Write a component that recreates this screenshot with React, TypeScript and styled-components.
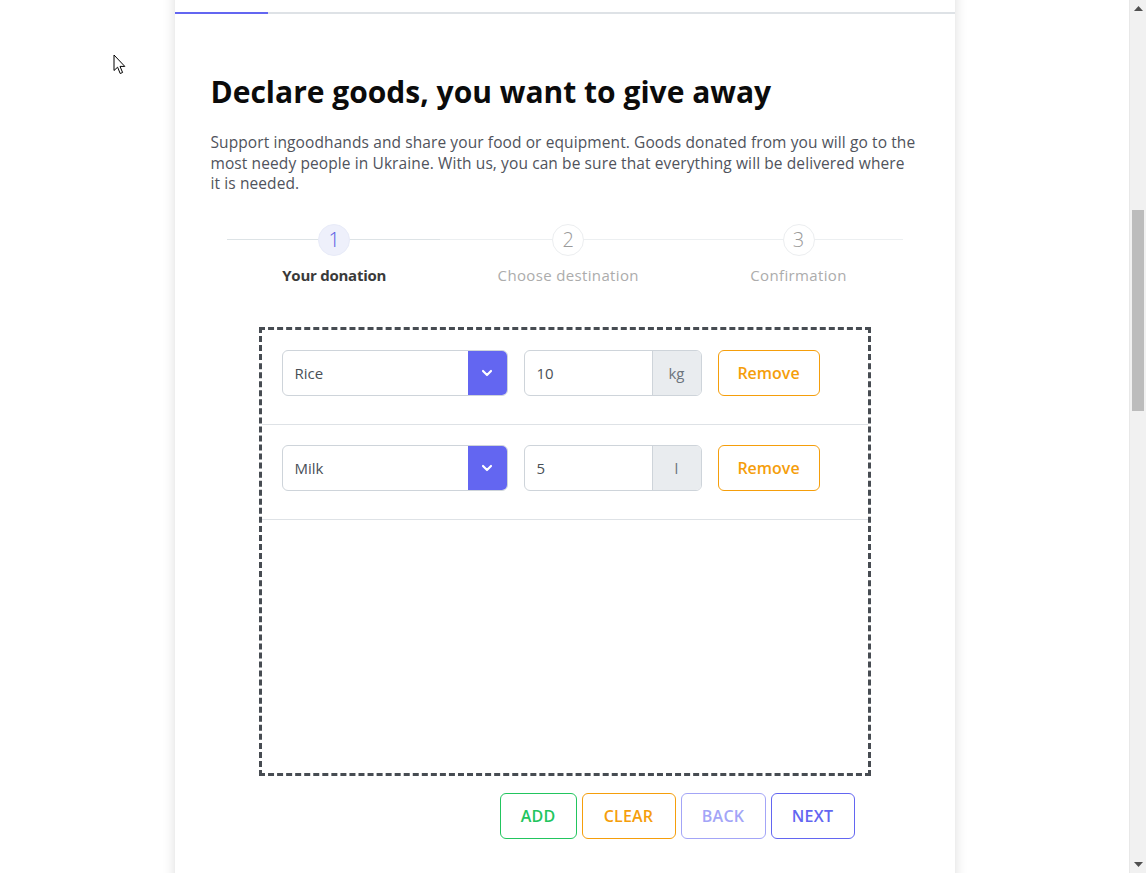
import React, { useLayoutEffect } from "react";
import styled, { createGlobalStyle } from "styled-components";

const SCROLL = 837;

const GlobalStyle = createGlobalStyle`
  html { overflow-y: scroll; scrollbar-width: none; }
  html::-webkit-scrollbar { display: none; }
  body {
    margin: 0;
    background: #ffffff;
    font-family: "Open Sans", "Noto Sans", sans-serif;
    color: #222;
  }
  * { box-sizing: border-box; }
`;

const Page = styled.div`
  min-height: 3640px;
  padding-right: 17px;
  background: #ffffff;
`;

const Card = styled.main`
  width: 780px;
  min-height: 3640px;
  margin: 0 auto;
  background: #ffffff;
  box-shadow: 0 0 12px rgba(0, 0, 0, 0.14);
  padding: ${SCROLL}px 0 40px;
`;

const TabBar = styled.div`
  display: flex;
  height: 14px;
  border-bottom: 2px solid #dee2e6;
  align-items: flex-end;
`;

const Tab = styled.div<{ $active?: boolean; $w: number }>`
  width: ${(p) => p.$w}px;
  height: 2px;
  margin-bottom: -2px;
  background: ${(p) => (p.$active ? "#6366f1" : "transparent")};
`;

const Content = styled.section`
  padding: 60px 36px 0;
`;

const Title = styled.h1`
  margin: 0;
  font-size: 30px;
  line-height: 36px;
  font-weight: 700;
  color: #0b0b0b;
`;

const Lead = styled.p`
  margin: 22px 0 0;
  max-width: 705px;
  font-size: 15.5px;
  line-height: 20.5px;
  letter-spacing: 0.1px;
  color: #50535c;
`;

const Stepper = styled.div`
  position: relative;
  margin: 30px 16px 0;
  display: flex;
  justify-content: space-around;
`;

const StepLine = styled.div`
  position: absolute;
  left: 0;
  right: 0;
  top: 15px;
  height: 1px;
  display: flex;
`;

const LineSeg = styled.div<{ $done?: boolean; $w?: number }>`
  height: 1px;
  background: ${(p) => (p.$done ? "#dde3e6" : "#eceff1")};
  ${(p) => (p.$w ? `width: ${p.$w}px;` : "flex: 1;")}
`;

const Step = styled.div`
  position: relative;
  display: flex;
  flex-direction: column;
  align-items: center;
  gap: 9px;
`;

const StepCircle = styled.div<{ $active?: boolean }>`
  width: 32px;
  height: 32px;
  border-radius: 50%;
  display: flex;
  align-items: center;
  justify-content: center;
  font-size: 20px;
  font-weight: 300;
  background: ${(p) => (p.$active ? "#eef0fb" : "#ffffff")};
  border: 1px solid ${(p) => (p.$active ? "#e8ebf8" : "#eceef0")};
  color: ${(p) => (p.$active ? "#5558e3" : "#9a9a9a")};
`;

const StepLabel = styled.div<{ $active?: boolean }>`
  font-size: 15px;
  line-height: 20px;
  font-weight: ${(p) => (p.$active ? 700 : 400)};
  letter-spacing: ${(p) => (p.$active ? "-0.25px" : "0.35px")};
  color: ${(p) => (p.$active ? "#3a3a3a" : "#acacac")};
`;

const DropZone = styled.div`
  width: 612px;
  min-height: 449px;
  margin: 42px auto 0;
  border: 3px dashed #474c52;
`;

const Row = styled.div`
  display: flex;
  align-items: center;
  gap: 16px;
  padding: 20px 20px 28px;
  border-bottom: 1px solid #dee2e6;
`;

const SelectBox = styled.div`
  width: 226px;
  height: 46px;
  display: flex;
  border: 1px solid #ced4da;
  border-radius: 6px;
  overflow: hidden;
  background: #fff;
`;

const SelectValue = styled.div`
  flex: 1;
  display: flex;
  align-items: center;
  padding-left: 12px;
  font-size: 15px;
  color: #495057;
`;

const SelectToggle = styled.div`
  width: 39px;
  background: #6366f1;
  display: flex;
  align-items: center;
  justify-content: center;
`;

const InputGroup = styled.div`
  width: 178px;
  height: 46px;
  display: flex;
  border: 1px solid #ced4da;
  border-radius: 6px;
  overflow: hidden;
`;

const AmountValue = styled.div`
  flex: 1;
  display: flex;
  align-items: center;
  padding-left: 12px;
  font-size: 15px;
  color: #495057;
`;

const Unit = styled.div`
  width: 49px;
  display: flex;
  align-items: center;
  justify-content: center;
  background: #e9ecef;
  border-left: 1px solid #ced4da;
  font-size: 15px;
  color: #6c757d;
`;

const OutlineButton = styled.button<{ $color: string; $w: number; $upper?: boolean }>`
  width: ${(p) => p.$w}px;
  height: 46px;
  border: 1px solid ${(p) => p.$color};
  border-radius: 6px;
  background: #fff;
  color: ${(p) => p.$color};
  font-family: inherit;
  font-size: 16px;
  letter-spacing: ${(p) => (p.$upper ? "0.2px" : "0")};
  font-weight: 600;
  text-transform: ${(p) => (p.$upper ? "uppercase" : "none")};
  padding: 0;
  cursor: pointer;
`;

const Actions = styled.div`
  width: 612px;
  margin: 17px auto 0;
  padding-right: 16px;
  display: flex;
  justify-content: flex-end;
  gap: 5px;
`;

const ScrollTrack = styled.div`
  position: fixed;
  top: 0;
  right: 0;
  width: 17px;
  height: 100vh;
  background: #f1f1f1;
  border-left: 1px solid #e8e8e8;
  display: flex;
  flex-direction: column;
  align-items: center;
`;

const ScrollArrow = styled.div`
  height: 17px;
  width: 100%;
  display: flex;
  align-items: center;
  justify-content: center;
`;

const ScrollRail = styled.div`
  flex: 1;
  width: 100%;
  padding: 0 2px;
  display: flex;
  flex-direction: column;
`;

const ScrollThumb = styled.div<{ $top: number; $h: number }>`
  margin-top: ${(p) => p.$top}px;
  height: ${(p) => p.$h}px;
  background: #bcbcbc;
`;

const Cursor = styled.svg`
  position: fixed;
  left: 113px;
  top: 54px;
  pointer-events: none;
`;

const Chevron = () => (
  <svg width="16" height="16" viewBox="0 0 24 24" fill="none" stroke="#fff" strokeWidth="3.2" strokeLinecap="round" strokeLinejoin="round">
    <polyline points="6 9 12 15 18 9" />
  </svg>
);

const items = [
  { name: "Rice", amount: "10", unit: "kg" },
  { name: "Milk", amount: "5", unit: "l" },
];

const steps = [
  { n: 1, label: "Your donation", active: true },
  { n: 2, label: "Choose destination" },
  { n: 3, label: "Confirmation" },
];

export default function App() {
  useLayoutEffect(() => {
    window.scrollTo(0, SCROLL);
  }, []);

  return (
    <Page>
      <GlobalStyle />
      <Card>
        <TabBar>
          <Tab $active $w={93} />
        </TabBar>
        <Content>
          <Title>Declare goods, you want to give away</Title>
          <Lead>
            Support ingoodhands and share your food or equipment. Goods donated from you will go to the most needy
            people in Ukraine. With us, you can be sure that everything will be delivered where it is needed.
          </Lead>
          <Stepper>
            <StepLine>
              <LineSeg $done $w={213} />
              <LineSeg />
            </StepLine>
            {steps.map((s) => (
              <Step key={s.n}>
                <StepCircle $active={s.active}>{s.n}</StepCircle>
                <StepLabel $active={s.active}>{s.label}</StepLabel>
              </Step>
            ))}
          </Stepper>
          <DropZone>
            {items.map((it) => (
              <Row key={it.name}>
                <SelectBox>
                  <SelectValue>{it.name}</SelectValue>
                  <SelectToggle>
                    <Chevron />
                  </SelectToggle>
                </SelectBox>
                <InputGroup>
                  <AmountValue>{it.amount}</AmountValue>
                  <Unit>{it.unit}</Unit>
                </InputGroup>
                <OutlineButton $color="#f59e0b" $w={102}>
                  Remove
                </OutlineButton>
              </Row>
            ))}
          </DropZone>
          <Actions>
            <OutlineButton $color="#22c55e" $w={77} $upper>
              Add
            </OutlineButton>
            <OutlineButton $color="#f59e0b" $w={94} $upper>
              Clear
            </OutlineButton>
            <OutlineButton $color="#a3a5f7" $w={85} $upper>
              Back
            </OutlineButton>
            <OutlineButton $color="#6366f1" $w={84} $upper>
              Next
            </OutlineButton>
          </Actions>
        </Content>
      </Card>
      <ScrollTrack>
        <ScrollArrow>
          <svg width="9" height="5" viewBox="0 0 9 5">
            <path d="M0 5 L4.5 0 L9 5 Z" fill="#505050" />
          </svg>
        </ScrollArrow>
        <ScrollRail>
          <ScrollThumb $top={193} $h={201} />
        </ScrollRail>
        <ScrollArrow>
          <svg width="9" height="5" viewBox="0 0 9 5">
            <path d="M0 0 L4.5 5 L9 0 Z" fill="#505050" />
          </svg>
        </ScrollArrow>
      </ScrollTrack>
      <Cursor width="13" height="21" viewBox="0 0 13 21">
        <path d="M1 1 L1 16.5 L4.6 13.2 L7.2 19.5 L9.6 18.5 L7 12.4 L11.8 12.4 Z" fill="#fff" stroke="#000" strokeWidth="1" strokeLinejoin="round" />
      </Cursor>
    </Page>
  );
}
